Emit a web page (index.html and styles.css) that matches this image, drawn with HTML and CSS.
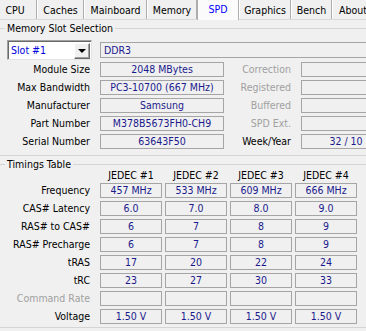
FILE: index.html
```html
<!DOCTYPE html>
<html lang="en">
<head>
    <meta charset="UTF-8">
    <title>CPU-Z - SPD</title>
    <link rel="stylesheet" href="styles.css">
</head>
<body>

<div class="window">
    <ul class="tabs">
        <li class="tab tab-cpu">CPU</li>
        <li class="tab tab-caches">Caches</li>
        <li class="tab tab-mainboard">Mainboard</li>
        <li class="tab tab-memory">Memory</li>
        <li class="tab tab-spd active">SPD</li>
        <li class="tab tab-graphics">Graphics</li>
        <li class="tab tab-bench">Bench</li>
        <li class="tab tab-about">About</li>
    </ul>

    <fieldset class="group group-slot">
        <legend>Memory Slot Selection</legend>
        <div class="slot-row">
            <div class="select">
                <span class="select-value">Slot #1</span>
                <span class="select-button"><span class="arrow"></span></span>
            </div>
            <div class="field field-type">DDR3</div>
        </div>
        <div class="slot-grid">
            <span class="label">Module Size</span>
            <span class="field">2048 MBytes</span>
            <span class="label dim">Correction</span>
            <span class="field"></span>

            <span class="label">Max Bandwidth</span>
            <span class="field">PC3-10700 (667 MHz)</span>
            <span class="label dim">Registered</span>
            <span class="field"></span>

            <span class="label">Manufacturer</span>
            <span class="field">Samsung</span>
            <span class="label dim">Buffered</span>
            <span class="field"></span>

            <span class="label">Part Number</span>
            <span class="field">M378B5673FH0-CH9</span>
            <span class="label dim">SPD Ext.</span>
            <span class="field"></span>

            <span class="label">Serial Number</span>
            <span class="field">63643F50</span>
            <span class="label">Week/Year</span>
            <span class="field">32 / 10</span>
        </div>
    </fieldset>

    <fieldset class="group group-timings">
        <legend>Timings Table</legend>
        <div class="timings">
            <span></span>
            <span class="head">JEDEC #1</span>
            <span class="head">JEDEC #2</span>
            <span class="head">JEDEC #3</span>
            <span class="head">JEDEC #4</span>

            <span class="label">Frequency</span>
            <span class="field">457 MHz</span>
            <span class="field">533 MHz</span>
            <span class="field">609 MHz</span>
            <span class="field">666 MHz</span>

            <span class="label">CAS# Latency</span>
            <span class="field">6.0</span>
            <span class="field">7.0</span>
            <span class="field">8.0</span>
            <span class="field">9.0</span>

            <span class="label">RAS# to CAS#</span>
            <span class="field">6</span>
            <span class="field">7</span>
            <span class="field">8</span>
            <span class="field">9</span>

            <span class="label">RAS# Precharge</span>
            <span class="field">6</span>
            <span class="field">7</span>
            <span class="field">8</span>
            <span class="field">9</span>

            <span class="label">tRAS</span>
            <span class="field">17</span>
            <span class="field">20</span>
            <span class="field">22</span>
            <span class="field">24</span>

            <span class="label">tRC</span>
            <span class="field">23</span>
            <span class="field">27</span>
            <span class="field">30</span>
            <span class="field">33</span>

            <span class="label dim">Command Rate</span>
            <span class="field"></span>
            <span class="field"></span>
            <span class="field"></span>
            <span class="field"></span>

            <span class="label">Voltage</span>
            <span class="field">1.50 V</span>
            <span class="field">1.50 V</span>
            <span class="field">1.50 V</span>
            <span class="field">1.50 V</span>
        </div>
    </fieldset>
</div>

</body>
</html>
```

FILE: styles.css
```css
* {
    box-sizing: border-box;
}

body {
    margin: 0;
    background-color: #f0f0f0;
    font-family: "DejaVu Sans Condensed", "DejaVu Sans", sans-serif;
    font-size: 10.5px;
    color: #000;
    overflow: hidden;
}

.window {
    width: 400px;
}

/* tab strip */
.tabs {
    display: flex;
    align-items: flex-start;
    list-style: none;
    margin: 0;
    padding: 0;
    height: 20px;
    border-bottom: 1px solid #d9d9d9;
}

.tab {
    flex: none;
    height: 19px;
    padding-top: 2px;
    line-height: 16px;
    border-left: 1px solid #fff;
    border-right: 1px solid #adadad;
    text-align: center;
    white-space: nowrap;
}

.tab-cpu       { width: 37px; padding-right: 6px; border-left: none; }
.tab-caches    { width: 47px; }
.tab-mainboard { width: 63px; }
.tab-memory    { width: 50px; }
.tab-spd       { width: 42px; }
.tab-graphics  { width: 52px; }
.tab-bench     { width: 41px; }
.tab-about     { width: 40px; text-align: left; padding-left: 6px; }

.tab.active {
    height: 20px;
    margin-bottom: -1px;
    padding-top: 1px;
    background-color: #fbfbfb;
    border-left: 1px solid #adadad;
    color: #0000ff;
}

/* group boxes */
.group {
    margin: 2px 0 0 -2px;
    padding: 0 0 6px;
    width: 398px;
    min-width: 0;
    border: 1px solid #d5d5d5;
}

.group legend {
    margin-left: 6px;
    padding: 0 2px;
    line-height: 13px;
}

.group-timings {
    margin-top: 2px;
    padding-bottom: 3px;
}

.slot-row {
    display: flex;
    align-items: center;
    gap: 8px;
    height: 20px;
    margin: 5px 0 0 8px;
}

.select {
    display: flex;
    align-items: center;
    justify-content: space-between;
    width: 85px;
    height: 20px;
    padding: 0 1px 0 3px;
    background-color: #fff;
    border: 1px solid #a0a0a0;
    border-right-color: #e3e3e3;
    border-bottom-color: #e3e3e3;
    box-shadow: inset 1px 1px 0 #696969;
    color: #0000dd;
}

.select-button {
    display: flex;
    align-items: center;
    justify-content: center;
    width: 16px;
    height: 16px;
    margin-top: 1px;
    background-color: #f0f0f0;
    border: 1px solid #fff;
    border-right-color: #696969;
    border-bottom-color: #696969;
    box-shadow: inset -1px -1px 0 #a0a0a0;
}

.arrow {
    width: 0;
    height: 0;
    border-left: 4px solid transparent;
    border-right: 4px solid transparent;
    border-top: 4px solid #000;
}

.field {
    height: 15px;
    line-height: 13px;
    border: 1px solid #a5a5a5;
    color: #1a1a8c;
    text-align: center;
    white-space: nowrap;
    overflow: hidden;
}

.field-type {
    flex: 1;
    height: 16px;
    line-height: 14px;
    margin-right: 6px;
    padding-left: 3px;
    text-align: left;
}

.label {
    line-height: 15px;
    padding-right: 10px;
    text-align: right;
    white-space: nowrap;
}

.dim {
    color: #a0a0a0;
}

.slot-grid {
    display: grid;
    grid-template-columns: 101px 124px 77px 90px;
    grid-auto-rows: 15px;
    row-gap: 3px;
    margin-top: 2px;
}

/* timings table */
.timings {
    display: grid;
    grid-template-columns: 98px repeat(4, 62px);
    grid-template-rows: 9px;
    grid-auto-rows: 15px;
    column-gap: 3px;
    row-gap: 3px;
}

.timings .label {
    padding-right: 7px;
}

.head {
    line-height: 9px;
    text-align: center;
    white-space: nowrap;
}
```
